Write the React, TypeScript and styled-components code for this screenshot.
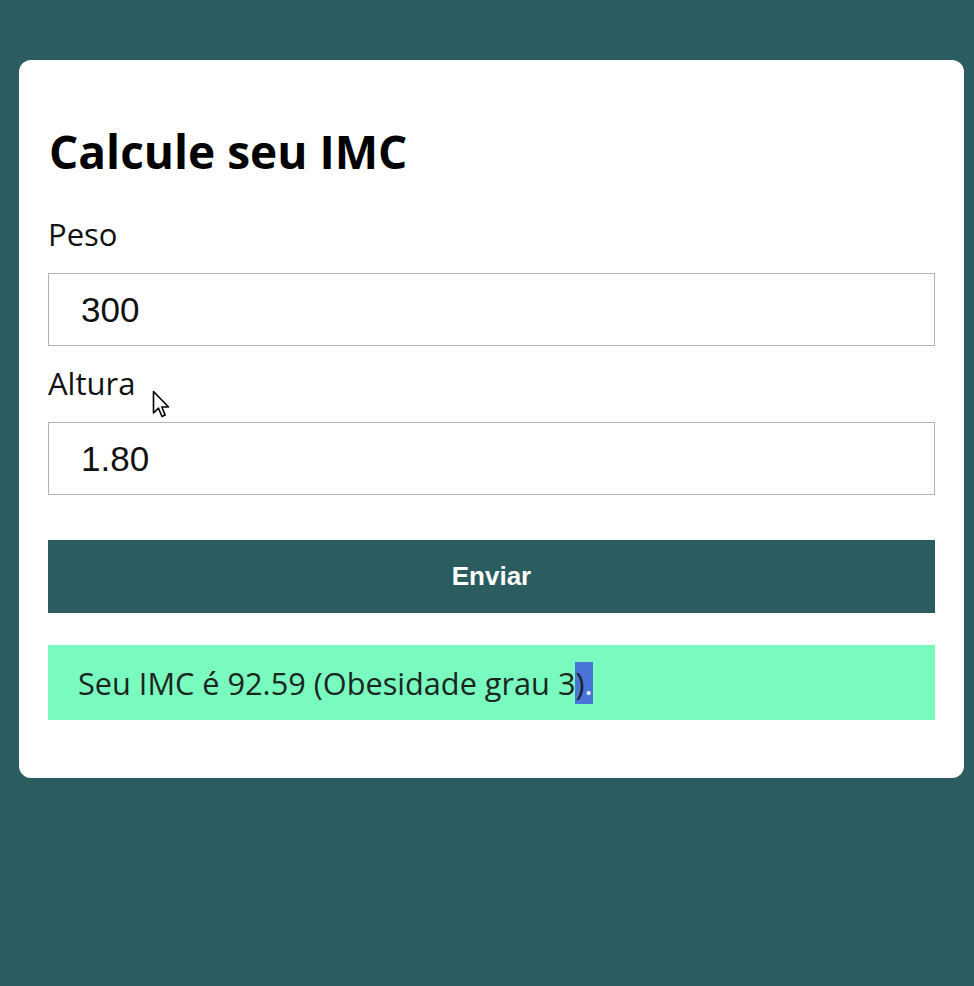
import styled, { createGlobalStyle } from "styled-components";

const GlobalStyle = createGlobalStyle`
    html, body{
        margin: 0;
        padding: 0;
        background: #2b5c5f;
        min-height: 986px;
    }
`

const Page = styled.div`
    padding: 60px 10px 0 19px;
`

const Card = styled.div`
    position: relative;
    width: 945px;
    box-sizing: border-box;
    background: #fff;
    border-radius: 12px;
    padding: 68px 29px 58px 29px;
    font-family: "Open Sans", sans-serif;
`

const Title = styled.h1`
    margin: 0 0 45px 1px;
    font-size: 46px;
    line-height: 1;
    font-weight: 700;
    color: #000;
`

const Label = styled.label`
    display: block;
    font-size: 31px;
    line-height: 1;
    color: #111;
    margin-bottom: 23px;
`

const Input = styled.input`
    display: block;
    width: 100%;
    height: 73px;
    box-sizing: border-box;
    border: 1.5px solid #b3b3b3;
    padding: 0 32px;
    font-family: "Liberation Sans", Arial, sans-serif;
    font-size: 35px;
    color: #111;
    outline: none;
    margin-bottom: ${(p: { $last?: boolean }) => (p.$last ? "45px" : "22px")};
`

const Button = styled.button`
    display: block;
    width: 100%;
    height: 73px;
    border: none;
    background: #2b5c5f;
    color: #fff;
    font-family: "Liberation Sans", Arial, sans-serif;
    font-weight: 700;
    font-size: 26px;
    cursor: pointer;
    margin-bottom: 32px;
`

const Result = styled.div`
    height: 75px;
    background: #79fbc0;
    display: flex;
    align-items: center;
    padding: 0 30px;
    font-size: 30.7px;
    color: #1a2620;
`

const Selected = styled.span`
    background: #4a74d9;
    color: #1a2620;

    & > b{
        font-weight: 400;
        color: #fff;
    }
`

const Pointer = styled.svg`
    position: absolute;
    left: 133px;
    top: 330px;
    width: 20px;
    height: 30px;
`

export default function App(){
    return(
        <Page>
            <GlobalStyle />
            <Card>
                <Title>Calcule seu IMC</Title>
                <Label>Peso</Label>
                <Input defaultValue="300" />
                <Label>Altura</Label>
                <Input defaultValue="1.80" $last />
                <Button type="button">Enviar</Button>
                <Result>
                    <span>Seu IMC é 92.59 (Obesidade grau 3<Selected>)<b>.</b></Selected></span>
                </Result>
                <Pointer viewBox="0 0 20 30">
                    <path d="M1.5 1.5 L1.5 23 L6.5 18.2 L10 26.5 L13.2 25.1 L9.8 17 L16.5 17 Z" fill="#fff" stroke="#000" strokeWidth="1.6" strokeLinejoin="round" />
                </Pointer>
            </Card>
        </Page>
    )
}
